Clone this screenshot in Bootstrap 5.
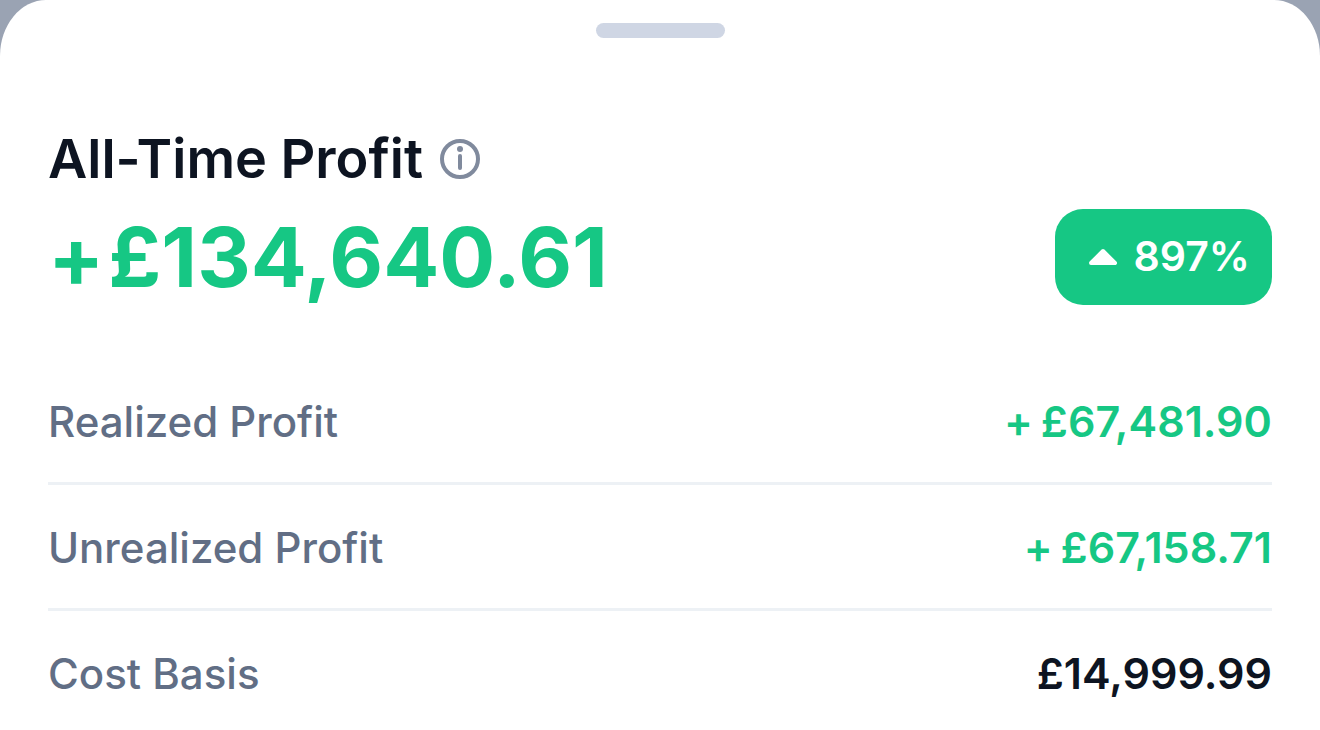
<!DOCTYPE html>
<html lang="en">
<head>
<meta charset="utf-8">
<meta name="viewport" content="width=device-width, initial-scale=1">
<title>All-Time Profit</title>
<link href="https://cdn.jsdelivr.net/npm/bootstrap@5.3.0/dist/css/bootstrap.min.css" rel="stylesheet">
<style>
body{background:#9aa3b3;font-family:Inter,"Liberation Sans",sans-serif;color:#0d1421}
.sheet{background:#fff;border-radius:46px 46px 0 0 / 56px 56px 0 0;padding:23px 48px 0}
.grabber{width:129px;height:15px;border-radius:8px;background:#cfd6e4}
.heading{margin-top:85px;gap:17px}
.sheet-title{font-size:54px;line-height:72px;font-weight:600}
.info-btn{width:40px;height:40px}
.summary{margin-top:14px}
.total{font-size:83px;line-height:96px;font-weight:700}
.gain{color:#16c784}
.pill{height:96px;padding:0 22px 0 33px;border-radius:28px;background:#16c784;font-size:41px;font-weight:600}
.stats{margin-top:54px}
.stat{padding:31px 0 29px;font-size:42px;line-height:63px;border-bottom:3px solid #edf1f5}
.stat:last-child{border-bottom:0;padding-bottom:0}
.stat dt{font-weight:500;color:#616e85}
.stat dd{font-size:43px;font-weight:600}
</style>
</head>
<body>
<main class="sheet min-vh-100">
<div class="grabber mx-auto"></div>
<div class="heading d-flex align-items-center">
<h1 class="sheet-title mb-0">All-Time Profit</h1>
<button type="button" class="info-btn btn p-0 border-0 d-flex" aria-label="About all-time profit"><svg viewBox="0 0 40 40" width="40" height="40" fill="none" stroke="#808a9d" stroke-width="4"><circle cx="20" cy="20" r="18"/><path d="M20 17v12" stroke-linecap="round"/><circle cx="20" cy="10" r="3" fill="#808a9d" stroke="none"/></svg></button>
</div>
<div class="summary d-flex flex-wrap justify-content-between align-items-center">
<div class="total gain d-flex gap-1"><span>+</span><span>£134,640.61</span></div>
<div class="pill text-white d-flex align-items-center gap-3"><svg width="30" height="18" viewBox="0 0 30 18" aria-hidden="true"><path d="M3 15 15 3 27 15Z" fill="#fff" stroke="#fff" stroke-width="4" stroke-linejoin="round"/></svg><span>897%</span></div>
</div>
<dl class="stats mb-0">
<div class="stat d-flex justify-content-between"><dt>Realized Profit</dt><dd class="gain d-flex gap-2 mb-0"><span>+</span><span>£67,481.90</span></dd></div>
<div class="stat d-flex justify-content-between"><dt>Unrealized Profit</dt><dd class="gain d-flex gap-2 mb-0"><span>+</span><span>£67,158.71</span></dd></div>
<div class="stat d-flex justify-content-between"><dt>Cost Basis</dt><dd class="mb-0">£14,999.99</dd></div>
</dl>
</main>
<script src="https://cdn.jsdelivr.net/npm/bootstrap@5.3.0/dist/js/bootstrap.bundle.min.js"></script>
</body>
</html>
